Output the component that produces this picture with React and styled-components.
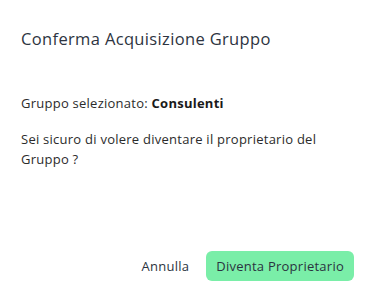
import React from "react";
import styled, { createGlobalStyle } from "styled-components";

const Global = createGlobalStyle`
  html, body { margin: 0; padding: 0; background: #fff; }
  body { font-family: "Open Sans", "Noto Sans", sans-serif; }
`;

const Dialog = styled.div`
  width: 380px;
  height: 302px;
  box-sizing: border-box;
  background: #fff;
  display: flex;
  flex-direction: column;
`;

const Header = styled.div`
  padding: 28px 21px 0;
`;

const Title = styled.h2`
  margin: 0;
  font-size: 16.5px;
  line-height: 22px;
  font-weight: 500;
  letter-spacing: 0.35px;
  color: #2d3441;
`;

const Body = styled.div`
  padding: 43px 21px 0;
  display: flex;
  flex-direction: column;
  gap: 16px;
  flex: 1;
`;

const Text = styled.p`
  margin: 0;
  font-size: 13px;
  line-height: 20px;
  letter-spacing: 0.25px;
  color: #2b2b2b;
`;

const Strong = styled.strong`
  font-weight: 700;
  color: #1a1a1a;
`;

const Footer = styled.div`
  display: flex;
  justify-content: flex-end;
  align-items: center;
  gap: 7px;
  padding: 0 26px 21px;
`;

const Button = styled.button`
  font-family: inherit;
  font-size: 13px;
  letter-spacing: 0.25px;
  height: 30px;
  padding: 0 10px;
  border: none;
  border-radius: 6px;
  cursor: pointer;
  color: #2b3340;
  background: ${(p) => (p.$primary ? "#7aeea8" : "transparent")};
`;

export default function App() {
  return (
    <>
      <Global />
      <Dialog>
        <Header>
          <Title>Conferma Acquisizione Gruppo</Title>
        </Header>
        <Body>
          <Text>
            Gruppo selezionato: <Strong>Consulenti</Strong>
          </Text>
          <Text>Sei sicuro di volere diventare il proprietario del Gruppo ?</Text>
        </Body>
        <Footer>
          <Button>Annulla</Button>
          <Button $primary>Diventa Proprietario</Button>
        </Footer>
      </Dialog>
    </>
  );
}
